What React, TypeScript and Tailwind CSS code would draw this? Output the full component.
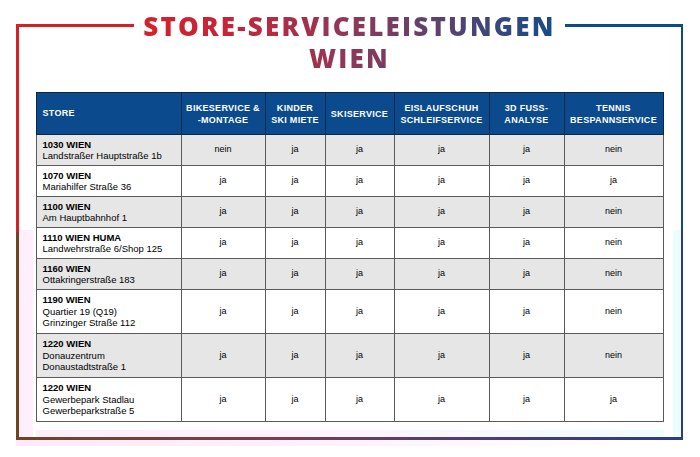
import React from "react";

type Row = {
    name: string;
    lines: string[];
    values: string[];
    tall?: boolean;
};

const rows: Row[] = [
    { name: "1030 WIEN", lines: ["Landstraßer Hauptstraße 1b"], values: ["nein", "ja", "ja", "ja", "ja", "nein"] },
    { name: "1070 WIEN", lines: ["Mariahilfer Straße 36"], values: ["ja", "ja", "ja", "ja", "ja", "ja"] },
    { name: "1100 WIEN", lines: ["Am Hauptbahnhof 1"], values: ["ja", "ja", "ja", "ja", "ja", "nein"] },
    { name: "1110 WIEN HUMA", lines: ["Landwehrstraße 6/Shop 125"], values: ["ja", "ja", "ja", "ja", "ja", "nein"] },
    { name: "1160 WIEN", lines: ["Ottakringerstraße 183"], values: ["ja", "ja", "ja", "ja", "ja", "nein"] },
    { name: "1190 WIEN", lines: ["Quartier 19 (Q19)", "Grinzinger Straße 112"], values: ["ja", "ja", "ja", "ja", "ja", "nein"], tall: true },
    { name: "1220 WIEN", lines: ["Donauzentrum", "Donaustadtstraße 1"], values: ["ja", "ja", "ja", "ja", "ja", "nein"], tall: true },
    { name: "1220 WIEN", lines: ["Gewerbepark Stadlau", "Gewerbeparkstraße 5"], values: ["ja", "ja", "ja", "ja", "ja", "ja"], tall: true },
];

const headers: { label: string[]; width: string }[] = [
    { label: ["BIKESERVICE &", "-MONTAGE"], width: "w-[84px]" },
    { label: ["KINDER", "SKI MIETE"], width: "w-[60px]" },
    { label: ["SKISERVICE"], width: "w-[69px]" },
    { label: ["EISLAUFSCHUH", "SCHLEIFSERVICE"], width: "w-[95px]" },
    { label: ["3D FUSS-", "ANALYSE"], width: "w-[75px]" },
    { label: ["TENNIS", "BESPANNSERVICE"], width: "w-[99px]" },
];

const ServiceTable = () => (
    <table className="w-[627px] table-fixed border-collapse font-['Liberation_Sans',Arial,sans-serif] text-[9.5px] text-black">
        <thead>
            <tr className="h-[42px] bg-[#0b4a8c] text-white">
                <th className="w-[145px] border border-[#0a2747] px-[6px] text-left text-[9px] font-bold tracking-[0.3px]">
                    STORE
                </th>
                {headers.map((h) => (
                    <th
                        key={h.label.join(" ")}
                        className={`${h.width} border border-[#0a2747] px-[2px] text-center text-[9px] font-bold leading-[12px] tracking-[0.3px]`}
                    >
                        {h.label.map((l) => (
                            <div key={l}>{l}</div>
                        ))}
                    </th>
                ))}
            </tr>
        </thead>
        <tbody>
            {rows.map((row, i) => (
                <tr
                    key={row.name + i}
                    className={`${row.tall ? "h-[44px]" : "h-[31px]"} ${i % 2 === 0 ? "bg-[#e6e6e6]" : "bg-white"}`}
                >
                    <td className="border border-[#5a5a5a] px-[6px] align-middle leading-[11.5px]">
                        <div className="font-bold">{row.name}</div>
                        {row.lines.map((l) => (
                            <div key={l}>{l}</div>
                        ))}
                    </td>
                    {row.values.map((v, j) => (
                        <td key={j} className="border border-[#5a5a5a] text-center align-middle text-[9px]">
                            {v}
                        </td>
                    ))}
                </tr>
            ))}
        </tbody>
    </table>
);

export default function App() {
    return (
        <div className="w-[700px] h-[457px] overflow-hidden bg-white pl-[16px] pt-[24px]">
            <div className="flex h-[416px] w-[667px] flex-col">
                <div className="flex flex-1">
                    {/* left edge */}
                    <div className="flex w-[3px] flex-col">
                        <div className="h-[208px] bg-[#d42027]" />
                        <div className="flex-1 bg-[#6d4520]" />
                    </div>

                    <div className="flex flex-1 flex-col">
                        <div className="-mt-[14px] flex items-start">
                            <div className="mt-[14px] h-[3px] flex-1 bg-[#d42027]" />
                            <h1 className="bg-[linear-gradient(90deg,#d8202a_0%,#c3253a_25%,#8e3858_50%,#5a4270_72%,#0e4c8c_100%)] bg-clip-text px-[9px] text-center font-['Open_Sans',sans-serif] text-[26px] font-extrabold leading-[32px] tracking-[2.2px] text-transparent">
                                <div>STORE-SERVICELEISTUNGEN</div>
                                <div>WIEN</div>
                            </h1>
                            <div className="mt-[14px] h-[3px] flex-1 bg-[#0d4a8c]" />
                        </div>

                        <div className="mt-[18px] flex flex-1">
                            <div className="flex w-[14px] flex-col">
                                <div className="h-[138px]" />
                                <div className="flex-1 bg-[#fdf0fc]" />
                            </div>
                            <div className="flex flex-1 flex-col pl-[3px]">
                                <ServiceTable />
                                <div className="mt-auto h-[7px] bg-[linear-gradient(90deg,#fdeefc,#fdf4fd_50%,#effdfd)]" />
                            </div>
                            <div className="flex w-[17px] flex-col">
                                <div className="h-[138px]" />
                                <div className="flex-1 bg-[linear-gradient(90deg,#ffffff_0%,#ffffff_50%,#ecfdfe_55%)]" />
                            </div>
                        </div>
                    </div>

                    {/* right edge */}
                    <div className="flex w-[3px] flex-col">
                        <div className="h-[208px] bg-[#0d4a8c]" />
                        <div className="flex-1 bg-[#2e3a8c]" />
                    </div>
                </div>
                <div className="h-[3px] bg-[linear-gradient(90deg,#6d4520,#7a3e4e_40%,#4a3c78_70%,#2e3a8c)]" />
            </div>
            <div className="h-[6px] w-[600px] bg-[linear-gradient(90deg,#fde9fb,#fdf3fd_60%,#ffffff)]" />
        </div>
    );
}
